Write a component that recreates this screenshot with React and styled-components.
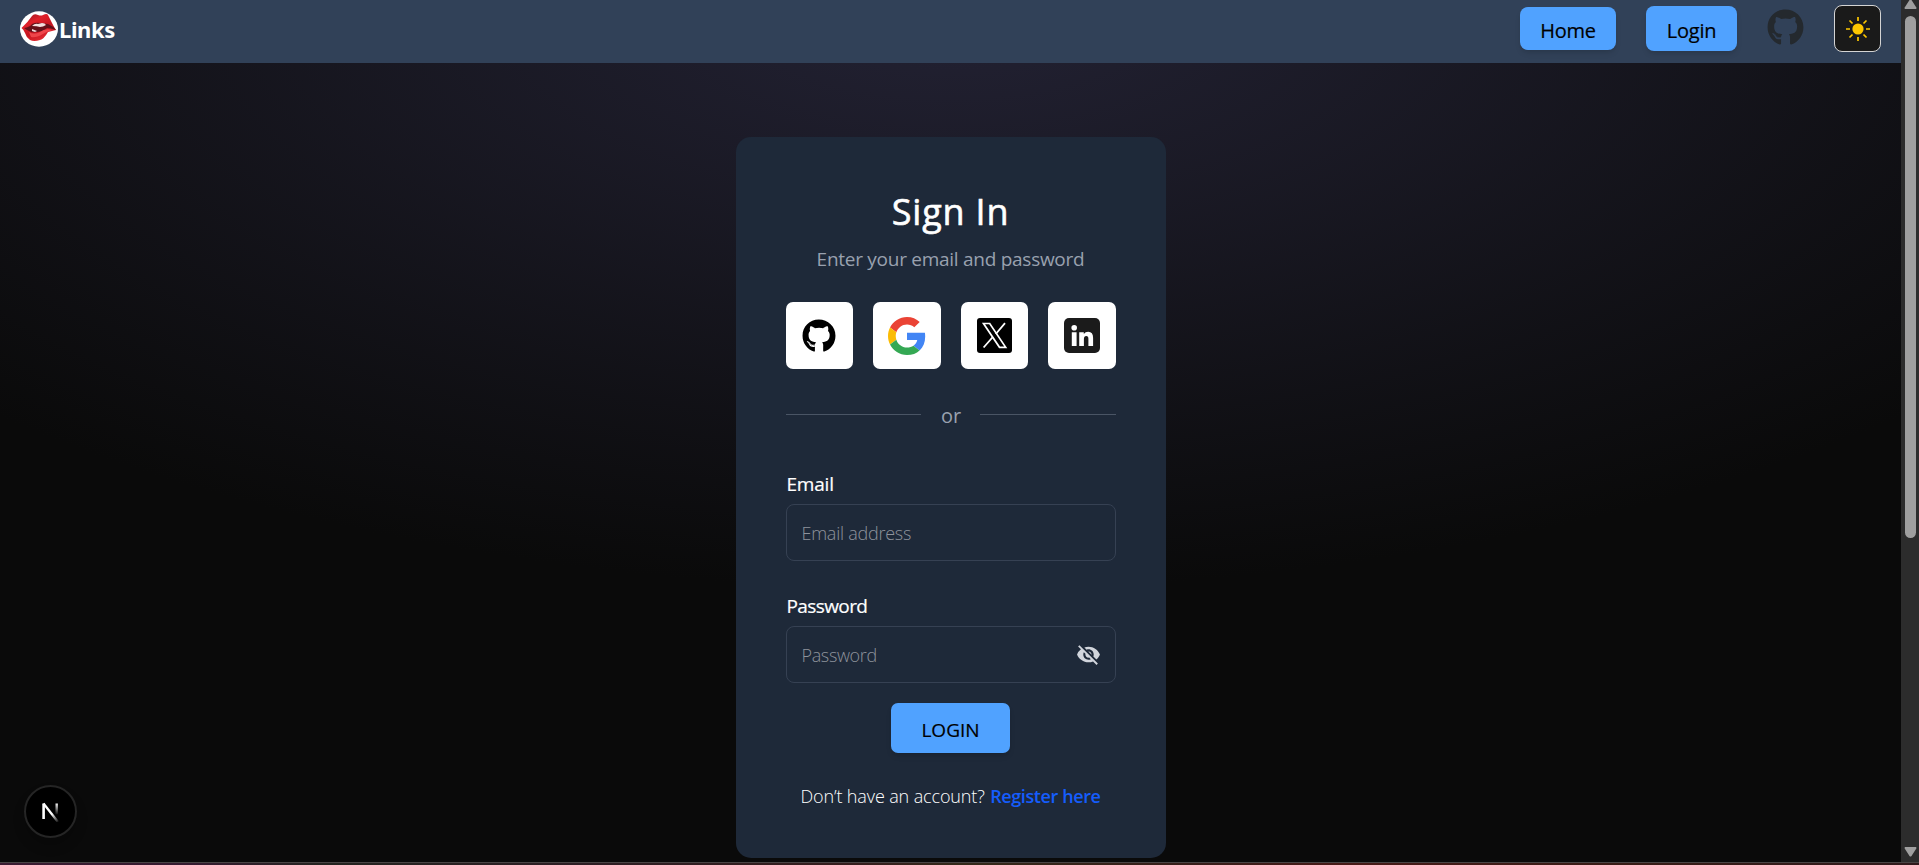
import React from 'react';
import styled, { createGlobalStyle } from 'styled-components';
import { FaGithub } from 'react-icons/fa';
import { MdVisibilityOff } from 'react-icons/md';

const Global = createGlobalStyle`
  * { box-sizing: border-box; }
  body { margin: 0; background: #0a0a0a; overflow: hidden; font-family: "Open Sans", "Noto Sans", sans-serif; color: #fff; }
  button, input { font: inherit; }
  svg { display: block; }
`;

const Screen = styled.div`
  display: grid;
  grid-template: 862px 3px / 1901px 18px;
  height: 865px;
`;

const Page = styled.div`
  display: flex;
  flex-direction: column;
  align-items: center;
  height: 862px;
  background: radial-gradient(ellipse 1344px 590px at 50% 0, #232234, #0a0a0a) #0a0a0a;
`;

const Navbar = styled.header`
  display: flex;
  align-items: flex-start;
  width: 100%;
  height: 63px;
  flex: none;
  padding: 0 20px;
  background: #314158;
`;

const Brand = styled.a`
  display: flex;
  align-items: center;
  height: 37px;
  margin-top: 10px;
`;

const BrandName = styled.span`
  font: 700 22px/30px "Noto Sans", sans-serif;
  letter-spacing: ${p => p.$track || 0}px;
  margin: 1px 0 0 1px;
`;

const Actions = styled.nav`
  display: flex;
  align-items: flex-start;
  margin-left: auto;
`;

const NavButton = styled.button`
  width: ${p => p.$w}px;
  height: ${p => p.$h}px;
  margin: ${p => p.$top}px 30px 0 0;
  padding: ${p => p.$pad}px 0 0;
  border: 0;
  border-radius: 8px;
  background: #50a2ff;
  color: #000;
  font-size: 20px;
  line-height: 30px;
  letter-spacing: ${p => p.$track || 0}px;
  -webkit-text-stroke: 0.2px;
  box-shadow: 0 4px 6px -1px #0000001a, 0 2px 4px -2px #0000001a;
`;

const RepoLink = styled.a`
  width: 37px;
  margin: 9px 30px 0 0;
  color: #24292e;
`;

const ThemeButton = styled.button`
  display: grid;
  place-items: center;
  width: 47px;
  height: 47px;
  margin-top: 5px;
  padding: 0;
  border: 1px solid #d4d4d4;
  border-radius: 8px;
  background: #1a1a1a;
`;

const Card = styled.main`
  display: flex;
  flex-direction: column;
  align-items: center;
  width: 430px;
  height: 721px;
  margin-top: 74px;
  padding: 50px 50px 0;
  border-radius: 15px;
  background: #1e2939;
`;

const Title = styled.h1`
  margin: 0;
  font: 500 36px/50px "Open Sans", sans-serif;
  letter-spacing: 0.8px;
  -webkit-text-stroke: 0.6px;
`;

const Subtitle = styled.p`
  margin: 7px 0 0;
  color: #99a1af;
  font-size: 19px;
  line-height: 30px;
  letter-spacing: -0.27px;
`;

const Providers = styled.div`
  display: grid;
  grid-template-columns: repeat(4, 1fr);
  gap: 20px;
  width: 100%;
  margin-top: 28px;
`;

const Provider = styled.button`
  display: grid;
  place-items: center;
  height: 67px;
  padding: 0;
  border: 0;
  border-radius: 7px;
  background: #fff;
  color: #000;
`;

const Divider = styled.div`
  display: flex;
  align-items: center;
  gap: 20px;
  width: 100%;
  height: 30px;
  margin-top: 30px;
  color: #99a1af;
  font-size: 20px;
  &::before, &::after { content: ""; flex: 1; height: 1px; background: #4a5565; }
`;

const DividerText = styled.span`
  width: 19px;
  line-height: 30px;
  margin-top: 4px;
`;

const Field = styled.label`
  display: block;
  width: 100%;
  margin-top: ${p => p.$top}px;
`;

const Label = styled.span`
  display: block;
  height: 30px;
  padding-left: 1px;
  font-size: 19px;
  font-weight: 500;
  line-height: 30px;
  letter-spacing: ${p => p.$track || 0}px;
  -webkit-text-stroke: 0.2px;
`;

const InputBox = styled.span`
  display: flex;
  align-items: center;
  height: 57px;
  margin-top: 5px;
  padding: 0 14px 0 15px;
  border: 1px solid #364153;
  border-radius: 8px;
  color: #d1d5dc;
`;

const Input = styled.input`
  flex: 1;
  min-width: 0;
  padding: 1px 0 0;
  border: 0;
  outline: 0;
  background: transparent;
  font-size: 18px;
  font-weight: 300;
  letter-spacing: ${p => p.$track || 0}px;
  &::placeholder { color: #8e939c; opacity: 1; }
`;

const Submit = styled.button`
  flex: none;
  width: 119px;
  height: 50px;
  margin-top: 20px;
  padding: 4px 0 0;
  border: 0;
  border-radius: 7px;
  background: #50a2ff;
  color: #000;
  font-size: 19px;
  -webkit-text-stroke: 0.2px;
  box-shadow: 0 4px 6px -1px #0000001a, 0 2px 4px -2px #0000001a;
`;

const Register = styled.p`
  margin: 28px 0 0;
  white-space: nowrap;
  font-size: 18px;
  font-weight: 300;
  line-height: 30px;
  letter-spacing: -0.13px;
`;

const RegisterLink = styled.a`
  margin-left: 1px;
  color: #155dfc;
  font-weight: 600;
  letter-spacing: -0.4px;
`;

const Scrollbar = styled.div`
  display: flex;
  flex-direction: column;
  align-items: center;
  height: 862px;
  padding-bottom: 5px;
  background: #2c2c2c;
  color: #9f9f9f;
`;

const Thumb = styled.div`
  width: 11px;
  height: 522px;
  margin: 6px 0 auto 1px;
  border-radius: 6px;
  background: #9f9f9f;
`;

const BottomEdge = styled.div`
  grid-column: 1 / -1;
  border-top: 1px solid #494545;
  background: linear-gradient(90deg, #3b1c32, #351b30 10%, #242420 17%, #2d1e24 30%, #351e1d 45%, #33291a 50%, #371e1a 62%, #481a17 70%, #381c16 85%, #301a1c);
`;

const DevBadge = styled.div`
  position: fixed;
  left: 24px;
  top: 785px;
  display: grid;
  place-items: center;
  width: 53px;
  height: 53px;
  border: 2px solid #252525;
  border-radius: 50%;
  background: #000;
  box-shadow: 0 8px 12px #0003;
`;

const Lips = () => (
  <svg width="38" height="36" viewBox="0 0 38 36">
    <defs>
      <linearGradient id="lip" x2=".6" y2="1"><stop stopColor="#8e1520" /><stop offset=".35" stopColor="#e0202a" /><stop offset=".65" stopColor="#c51520" /><stop offset="1" stopColor="#e52c32" /></linearGradient>
    </defs>
    <ellipse cx="19" cy="18" rx="19" ry="17.7" fill="#fff" />
    <path d="M1.5 17Q8 11 12 5q2-3 6-1 3 1 5 0 4-2 5 0l4 8q2 4 4 7-4 1-8 2-4 7-8 8-6 2-10 0-4-3-5-7-1-3-3.5-5z" fill="url(#lip)" />
    <path d="M4 17q6-1 8-4 4-2 8-1l8 1q5 2 8 6-6-2-9-2-4 4-11 4-6 1-12-4z" fill="#651019" />
    <path d="M12 15q3-3 6-2l4-1q3 0 4 2-3 2-6 2-3-1-8-1zM12 18l5 2-2 1-3-1z" fill="#f2dddd" />
    <path d="M9 21q5 3 11 0 5-4 12-2-6 2-9 4-7 4-12 3z" fill="#ef454a" />
  </svg>
);

const Sun = () => (
  <svg width="26" height="26" viewBox="0 0 26 26" stroke="#fdc700" strokeWidth="1.7">
    <circle cx="13" cy="13" r="5.6" fill="#fdc700" stroke="none" />
    <path d="M13 1v4M13 21v4M1 13h4M21 13h4M4.5 4.5l3 3M18.5 18.5l3 3M4.5 21.5l3-3M18.5 7.5l3-3" />
  </svg>
);

const GoogleLogo = () => (
  <svg width="38" height="38" viewBox="0 0 48 48">
    <path fill="#ea4335" d="M24 9.5c3.54 0 6.71 1.22 9.21 3.6l6.85-6.85C35.9 2.38 30.47 0 24 0 14.62 0 6.51 5.38 2.56 13.22l7.98 6.19C12.43 13.72 17.74 9.5 24 9.5z" />
    <path fill="#4285f4" d="M46.98 24.55c0-1.57-.15-3.09-.38-4.55H24v9.02h12.94c-.58 2.96-2.26 5.48-4.78 7.18l7.73 6c4.51-4.18 7.09-10.36 7.09-17.65z" />
    <path fill="#fbbc05" d="M10.53 28.59c-.48-1.45-.76-2.99-.76-4.59s.27-3.14.76-4.59l-7.98-6.19C.92 16.46 0 20.12 0 24c0 3.88.92 7.54 2.56 10.78l7.97-6.19z" />
    <path fill="#34a853" d="M24 48c6.48 0 11.93-2.13 15.89-5.81l-7.73-6c-2.15 1.45-4.92 2.3-8.16 2.3-6.26 0-11.57-4.22-13.47-9.91l-7.98 6.19C6.51 42.62 14.62 48 24 48z" />
  </svg>
);

const XLogo = () => (
  <svg width="35" height="35" viewBox="0 0 35 35">
    <rect width="35" height="35" rx="3" fill="#000" />
    <path d="M6.5 5.5h6.2l16 23.8h-6.2z" fill="none" stroke="#fff" strokeWidth="1.7" />
    <path d="M28 5.2 18.8 16M15.8 19 6.6 29.5" stroke="#fff" strokeWidth="1.8" />
  </svg>
);

const LinkedInLogo = () => (
  <svg width="36" height="35" viewBox="0 0 36 35">
    <rect width="36" height="35" rx="5" fill="#1b1b1b" />
    <circle cx="10.2" cy="9.8" r="2.8" fill="#fff" />
    <path d="M7.8 14.2h4.8V28H7.8zM15.2 14.2h4.6v1.9q1.5-2.3 4.4-2.3 4.9 0 4.9 6V28h-4.7v-7.3q0-2.8-2.1-2.8-2.4 0-2.4 3V28h-4.7z" fill="#fff" />
  </svg>
);

const NextLogo = () => (
  <svg width="20" height="20" viewBox="0 0 20 20" fill="none">
    <defs>
      <linearGradient id="diag" gradientUnits="userSpaceOnUse" x1="11" y1="12" x2="18" y2="20"><stop stopColor="#fff" /><stop offset="1" stopColor="#fff" stopOpacity="0" /></linearGradient>
      <linearGradient id="stem" gradientUnits="userSpaceOnUse" x1="0" y1="1" x2="0" y2="13"><stop stopColor="#fff" /><stop offset="1" stopColor="#fff" stopOpacity="0" /></linearGradient>
    </defs>
    <path d="M2.6 17V1.5" stroke="#fff" strokeWidth="2.6" />
    <path d="M15.7 1.5v11" stroke="url(#stem)" strokeWidth="2.4" />
    <path d="M2.5 1.5 17 20" stroke="url(#diag)" strokeWidth="2.3" />
  </svg>
);

const Arrow = ({ down }) => (
  <svg width="13" height="10" viewBox="0 0 13 10" fill="currentColor">
    <path d={down ? 'M1 0h11q1 1 0 2L7.5 9q-1 1-2 0L1 2Q0 1 1 0z' : 'M5.5 0q1-1 2 0L12 7q1 1 0 2H1q-1-1 0-2z'} />
  </svg>
);

export default function App() {
  return (
    <Screen>
      <Global />
      <Page>
        <Navbar>
          <Brand><Lips /><BrandName $track={-0.4}>Links</BrandName></Brand>
          <Actions>
            <NavButton $w={96} $h={43} $top={7} $pad={5} $track={-0.3}>Home</NavButton>
            <NavButton $w={91} $h={45} $top={6} $pad={4} $track={-0.2}>Login</NavButton>
            <RepoLink><FaGithub size={37} /></RepoLink>
            <ThemeButton><Sun /></ThemeButton>
          </Actions>
        </Navbar>
        <Card>
          <Title>Sign In</Title>
          <Subtitle>Enter your email and password</Subtitle>
          <Providers>
            <Provider><FaGithub size={34} /></Provider>
            <Provider><GoogleLogo /></Provider>
            <Provider><XLogo /></Provider>
            <Provider><LinkedInLogo /></Provider>
          </Providers>
          <Divider><DividerText>or</DividerText></Divider>
          <Field $top={40}>
            <Label $track={-0.2}>Email</Label>
            <InputBox><Input $track={-0.25} placeholder="Email address" /></InputBox>
          </Field>
          <Field $top={30}>
            <Label $track={-0.6}>Password</Label>
            <InputBox><Input $track={-0.35} type="password" placeholder="Password" /><MdVisibilityOff size={25} /></InputBox>
          </Field>
          <Submit>LOGIN</Submit>
          <Register>Don’t have an account? <RegisterLink>Register here</RegisterLink></Register>
        </Card>
      </Page>
      <Scrollbar><Arrow /><Thumb /><Arrow down /></Scrollbar>
      <BottomEdge />
      <DevBadge><NextLogo /></DevBadge>
    </Screen>
  );
}
